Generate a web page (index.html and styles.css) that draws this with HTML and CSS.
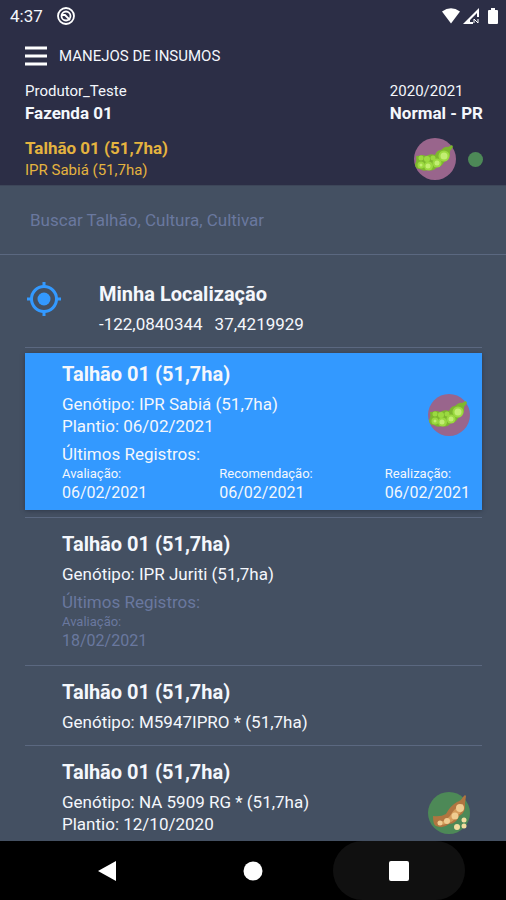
FILE: index.html
```html
<!DOCTYPE html>
<html lang="pt-BR">
<head>
<meta charset="utf-8">
<meta name="viewport" content="width=device-width, initial-scale=1">
<title>Manejos de Insumos</title>
<link rel="stylesheet" href="styles.css">
</head>
<body>
<svg class="defs" aria-hidden="true">
  <symbol id="soy-green" viewBox="0 0 42 42">
    <circle cx="21" cy="21" r="21" fill="#99658c"/>
    <path d="M4 18q4-2 8 0q5-3 9-1q2-5 6-5q4-4 7-3l4-2l1 2l-3 4q1 8-6 11q-2 5-7 5q-4 5-9 3q-5 2-8-1q-5 0-5-5q2-3 1-8Z" fill="#7db62e"/>
    <g fill="#9bd940"><circle cx="7" cy="20" r="2.5"/><circle cx="13" cy="21" r="3"/><circle cx="19" cy="20" r="2.5"/><circle cx="7" cy="27" r="3.500"/><circle cx="14.500" cy="28" r="4.500"/><circle cx="23" cy="25" r="4.500"/><circle cx="30" cy="18" r="5.500"/></g>
    <g fill="#c2ee72"><circle cx="14" cy="28" r="2.500"/><circle cx="23" cy="25" r="2.500"/><circle cx="30" cy="18" r="3.500"/><circle cx="7" cy="27" r="1.500"/></g>
  </symbol>
  <symbol id="soy-dry" viewBox="0 0 42 42">
    <circle cx="21" cy="21" r="21" fill="#4d8957"/>
    <path d="M5 24q8 1 13-2q4-8 11-12q4-1 6-5l2-2l1 1l-1 7q1 10-6 13q-3 8-10 8q-6 5-13 2q-3-1-3-10Z" fill="#b07540"/>
    <path d="M9 30q8 0 13-6q5-9 13-12q1 9-6 11q-3 7-9 8q-6 4-11-1Z" fill="#d49c5b"/>
    <g fill="#f0cc90"><circle cx="12" cy="31" r="2.500"/><circle cx="19" cy="29" r="3"/><circle cx="27" cy="24" r="3.500"/><circle cx="32" cy="16" r="4"/></g>
    <g fill="#f3dda0"><circle cx="29" cy="35" r="3"/><circle cx="36" cy="28" r="2.500"/><circle cx="36" cy="34" r="2.500"/></g>
  </symbol>
</svg>
<div class="app">
  <header class="header">
    <div class="status">
      <span>4:37</span>
      <svg class="status-app" viewBox="0 0 18 18" aria-hidden="true"><g fill="none" stroke="#fff" stroke-width="1.800"><circle cx="9" cy="9" r="8"/><circle cx="9" cy="9" r="4.500"/><path d="M5 8l3 0l5 5"/></g></svg>
      <div class="status-right">
        <svg width="18" height="16" viewBox="0 0 18 16" aria-hidden="true"><path d="M0 3.500Q9-3 18 3.500L9 15.500Z" fill="#fff"/></svg>
        <svg width="17" height="16" viewBox="0 0 17 16" aria-hidden="true"><path d="M0 16L16 0V9H14V5L7 12V14H10V16Z" fill="#fff"/><path d="M11 11l4 4M15 11v4M11 15v-4" stroke="#fff" fill="none"/></svg>
        <svg class="battery" width="10" height="16" viewBox="0 0 10 16" aria-hidden="true"><path d="M3 0H7V2H9Q10 2 10 3V15Q10 16 9 16H1Q0 16 0 15V3Q0 2 1 2H3Z" fill="#fff"/></svg>
      </div>
    </div>
    <div class="titlebar">
      <button class="menu" aria-label="Menu"><svg width="22" height="20" viewBox="0 0 22 20" aria-hidden="true"><path d="M0 2H22M0 10H22M0 18H22" stroke="#fff" stroke-width="3"/></svg></button>
      <h1>MANEJOS DE INSUMOS</h1>
    </div>
    <div class="farm">
      <div><p>Produtor_Teste</p><p class="strong">Fazenda 01</p></div>
      <div><p>2020/2021</p><p class="strong">Normal - PR</p></div>
    </div>
    <div class="current">
      <div><p class="strong">Talhão 01 (51,7ha)</p><p class="variety">IPR Sabiá (51,7ha)</p></div>
      <svg class="crop" aria-hidden="true"><use href="#soy-green"/></svg>
      <span class="dot"></span>
    </div>
  </header>
  <input class="search" type="search" aria-label="Buscar" placeholder="Buscar Talhão, Cultura, Cultivar">
  <main class="main">
    <section class="location">
      <svg width="34" height="34" viewBox="0 0 34 34" aria-hidden="true"><g fill="none" stroke="#3399ff" stroke-width="3"><circle cx="17" cy="17" r="12.500"/><path d="M17 0V5M17 29V34M0 17H5M29 17H34"/></g><circle cx="17" cy="17" r="6.500" fill="#3399ff"/></svg>
      <div><h2>Minha Localização</h2><p class="coords"><span>-122,0840344</span><span>37,4219929</span></p></div>
    </section>
    <ul class="list">
      <li class="row selected">
        <div class="card">
          <h2>Talhão 01 (51,7ha)</h2>
          <div class="info"><div><p>Genótipo: IPR Sabiá (51,7ha)</p><p>Plantio: 06/02/2021</p></div><svg class="crop" aria-hidden="true"><use href="#soy-green"/></svg></div>
          <div class="records">
            <p>Últimos Registros:</p>
            <dl>
              <div><dt>Avaliação:</dt><dd>06/02/2021</dd></div>
              <div><dt>Recomendação:</dt><dd>06/02/2021</dd></div>
              <div><dt>Realização:</dt><dd>06/02/2021</dd></div>
            </dl>
          </div>
        </div>
      </li>
      <li class="row">
        <h2>Talhão 01 (51,7ha)</h2>
        <div class="info"><p>Genótipo: IPR Juriti (51,7ha)</p></div>
        <div class="records muted"><p>Últimos Registros:</p><dl><div><dt>Avaliação:</dt><dd>18/02/2021</dd></div></dl></div>
      </li>
      <li class="row">
        <h2>Talhão 01 (51,7ha)</h2>
        <div class="info"><p>Genótipo: M5947IPRO * (51,7ha)</p></div>
      </li>
      <li class="row">
        <h2>Talhão 01 (51,7ha)</h2>
        <div class="info"><div><p>Genótipo: NA 5909 RG * (51,7ha)</p><p>Plantio: 12/10/2020</p></div><svg class="crop" aria-hidden="true"><use href="#soy-dry"/></svg></div>
      </li>
    </ul>
  </main>
  <nav class="nav" aria-label="Sistema">
    <button aria-label="Voltar"><svg width="20" height="22" viewBox="0 0 20 22" aria-hidden="true"><path d="M1 11L19 1V21Z" fill="#fff"/></svg></button>
    <button aria-label="Início"><svg width="20" height="20" viewBox="0 0 20 20" aria-hidden="true"><circle cx="10" cy="10" r="9.500" fill="#fff"/></svg></button>
    <button class="pressed" aria-label="Recentes"><svg width="20" height="20" viewBox="0 0 20 20" aria-hidden="true"><rect width="20" height="20" rx="2" fill="#fff"/></svg></button>
  </nav>
</div>
</body>
</html>
```
FILE: styles.css
```css
* { box-sizing: border-box; }
body, h1, h2, p, ul, dl, dd { margin: 0; padding: 0; }
body {
  background: #445062;
  color: #f4f7fc;
  font: 17px/22px Roboto, "Liberation Sans", sans-serif;
}
ul { list-style: none; }
button { background: none; border: 0; padding: 0; display: flex; align-items: center; justify-content: center; }
svg { flex: none; }
.defs { position: absolute; width: 0; height: 0; }
.app { display: flex; flex-direction: column; height: 100vh; }

.header {
  flex: none;
  padding: 0 23px 4px 25px;
  background: #2c2e46;
  border-bottom: 1px solid #3d4659;
}
.status {
  display: flex;
  align-items: center;
  height: 32px;
  margin: 0 -15px;
}
.status-app { width: 18px; height: 18px; margin-left: 14px; }
.status-right { display: flex; gap: 3px; margin-left: auto; }
.battery { margin-left: 5px; }
.titlebar { display: flex; align-items: center; gap: 12px; height: 48px; }
.titlebar h1 { font-size: 15px; font-weight: 400; }
.farm { display: flex; justify-content: space-between; font-size: 15px; }
.strong { font-size: 17px; font-weight: 700; }
.current {
  display: flex;
  align-items: center;
  padding-top: 13px;
  color: #e4b33f;
}
.current .crop { margin-left: auto; }
.variety { font-size: 15px; }
.crop { width: 42px; height: 42px; }
.dot { width: 15px; height: 15px; margin-left: 12px; border-radius: 50%; background: #4d8957; }

.search {
  flex: none;
  height: 69px;
  padding: 0 30px;
  border: 0;
  border-bottom: 1px solid #5b6880;
  border-radius: 0;
  background: #445062;
  color: #f4f7fc;
  font: inherit;
  appearance: none;
}
.search::placeholder { color: #6a789f; opacity: 1; }

.main { flex: 1; min-height: 0; overflow: hidden; padding: 0 24px 0 25px; }
.location { display: flex; gap: 38px; padding: 27px 0 12px 2px; }
h2 { margin-bottom: 7px; font-size: 20px; line-height: 24px; font-weight: 700; }
.coords { display: flex; gap: 12px; }
.row { padding: 14px 12px 12px 37px; border-top: 1px solid #5b6880; }
.selected { padding: 5px 0 7px; }
.card {
  padding: 9px 12px 7px 37px;
  background: #3399ff;
  box-shadow: 0 1px 4px #30394a;
}
.info { display: flex; align-items: center; justify-content: space-between; }
.records { padding-top: 6px; }
.records dl { display: flex; justify-content: space-between; }
.records dt { font-size: 13px; line-height: 18px; }
.records dd { font-size: 16px; line-height: 20px; }
.muted { padding-bottom: 2px; color: #6a789f; }

.nav {
  flex: none;
  display: flex;
  justify-content: center;
  gap: 14px;
  height: 59px;
  background: #000;
}
.nav button { width: 132px; }
.nav .pressed { border-radius: 30px; background: #101010; }
```
